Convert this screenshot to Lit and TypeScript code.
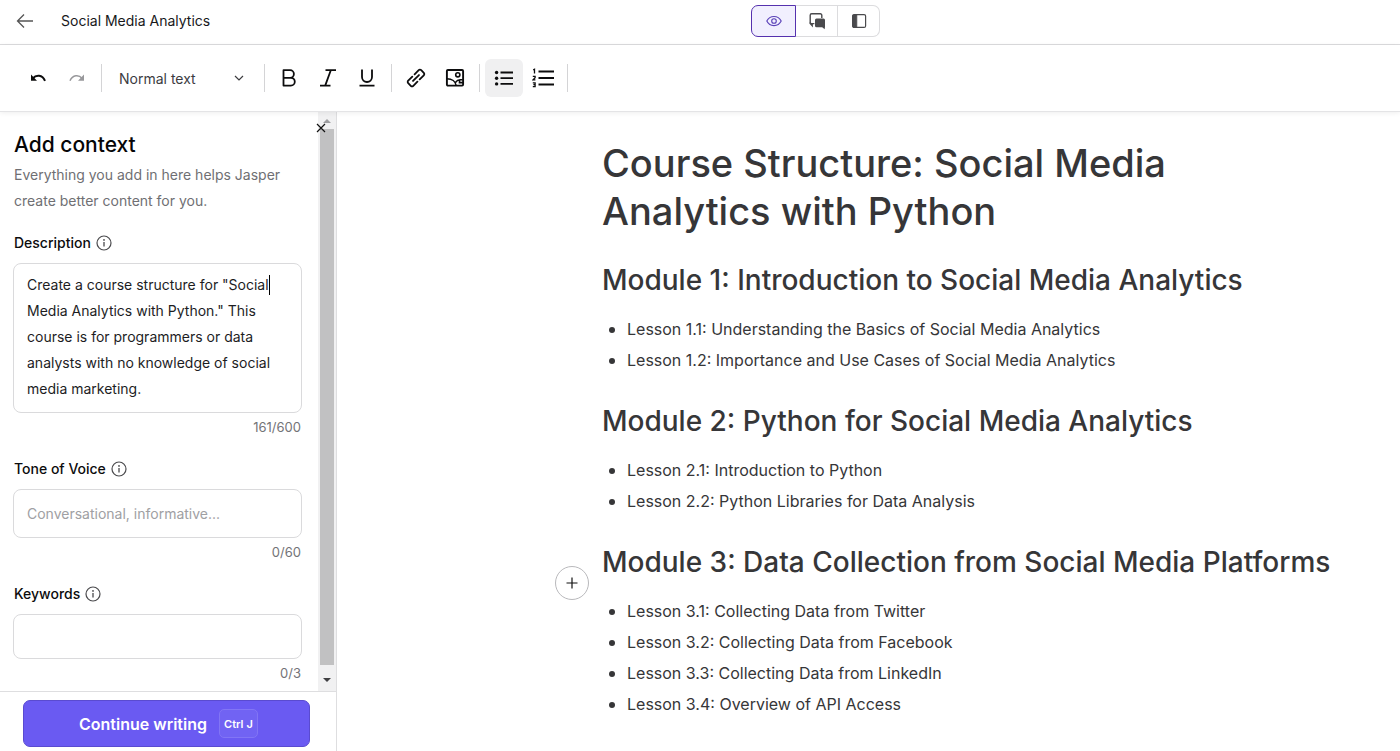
import { LitElement, html, css, svg, nothing, type TemplateResult } from "lit";
import { customElement, property, state } from "lit/decorators.js";
import { classMap } from "lit/directives/class-map.js";

const icon = (size: number, body: TemplateResult, box = 24) => html`
  <svg width=${size} height=${size} viewBox="0 0 ${box} ${box}" fill="none" stroke="currentColor"
    stroke-width="2" aria-hidden="true">${body}</svg>`;

const icons = {
  back: icon(18, svg`<path d="M17 9H1.5M8 2.5L1.5 9 8 15.5" stroke-width="1.3"/>`, 18),
  undo: icon(16, svg`<path d="M3 8.2C6 4.6 12.4 4.4 15 10.8" stroke-width="2"/><path d="M1 4.6v6.2h6z" fill="currentColor" stroke="none"/>`, 16),
  redo: icon(16, svg`<path d="M13 8.2C10 4.6 3.6 4.4 1 10.8" stroke-width="1.5"/><path d="M15 4.6v6.2H9z" fill="currentColor" stroke="none"/>`, 16),
  chevron: icon(10, svg`<path d="M1 3l4 4 4-4" stroke-width="1.2"/>`, 10),
  bold: icon(20, svg`<path d="M4.5 2.2h6.6a3.8 3.8 0 010 7.6H4.5zM4.5 9.8h7.4a3.9 3.9 0 010 7.8H4.5z" stroke-width="1.8" stroke-linejoin="round"/>`, 20),
  italic: icon(20, svg`<path d="M7.5 2.2H18M2 17.6h10.5M12.8 2.2L7.2 17.6" stroke-width="1.8"/>`, 20),
  underline: icon(20, svg`<path d="M5 1.5v7.5a5 5 0 0010 0V1.5M2.5 17.6h15" stroke-width="1.8"/>`, 20),
  link: icon(20, svg`<g transform="rotate(-45 10 10)" stroke-width="1.8" stroke-linecap="round"><path d="M8.4 6.4H2.6a1.8 1.8 0 00-1.8 1.8v3.6a1.8 1.8 0 001.8 1.8h5.8M11.6 13.6h5.8a1.8 1.8 0 001.8-1.8V8.2a1.8 1.8 0 00-1.8-1.8h-5.8M5.8 10h8.4"/></g>`, 20),
  image: icon(20, svg`<rect x="1.9" y="2" width="16.2" height="15.6" rx="1" stroke-width="1.9"/><circle cx="12.8" cy="6.8" r="2.1" stroke-width="1.6"/><path d="M2 10.8c4.8 0 8.6 2.6 9.2 6.8M17.8 11.8h-2.600c-2.2 0-3.600 1-4.800 2.600M14.500 12v2.600h3.500" stroke-width="1.6"/>`, 20),
  bullets: icon(20, svg`<path d="M6.5 4.5H19M6.5 10.2H19M6.5 15.9H19" stroke-width="1.8"/><g fill="currentColor" stroke="none"><circle cx="2.6" cy="4.5" r="1.7"/><circle cx="2.6" cy="10.2" r="1.7"/><circle cx="2.6" cy="15.9" r="1.7"/></g>`, 20),
  numbers: icon(22, svg`<path d="M6.5 4.5H22M6.5 11H22M6.5 17.5H22" stroke-width="2.2"/><path d="M1.2 2.9l1.3-.6v4.2M.8 9.3h2.3v1.5L1 12.9h2.4M.8 15.8h2.3v3.8H.8M1.4 17.7h1.5" stroke-width="1.3"/>`, 22),
  eye: icon(16, svg`<path d="M.8 8C3.8 1.9 12.2 1.9 15.2 8 12.2 14.1 3.8 14.1.8 8z" stroke-width="1.1"/><circle cx="8" cy="8" r="2.3" stroke-width="1.1"/>`, 16),
  chat: icon(18, svg`<path d="M4.2 11.6v2.2l-2-2.2V3.2a1.5 1.5 0 011.5-1.5h8.6a1.5 1.5 0 011.5 1.5V6" stroke-width="1.4"/><path d="M2.2 10.6c0 .6.6 1 1.2 1h3" stroke-width="1.4"/><path d="M8.5 6.6h7a1.5 1.5 0 011.5 1.5v7l-.4 2.2-2.4-2H8.5A1.5 1.5 0 017 13.8V8.1a1.5 1.5 0 011.5-1.5z" fill="currentColor" stroke="none"/>`, 18),
  panel: icon(16, svg`<rect x="1.6" y="1.6" width="13" height="12.8" rx="1.5" stroke-width="1.2"/><path d="M2 2h3.8v12H2z" fill="currentColor" stroke-width=".8"/>`, 16),
  info: icon(16, svg`<circle cx="8" cy="8" r="7" stroke-width="1.2"/><path d="M8 7v4.4" stroke-width="1.3"/><circle cx="8" cy="4.9" r=".9" fill="currentColor" stroke="none"/>`, 16),
  close: icon(10, svg`<path d="M1 1l8 8M9 1L1 9" stroke-width="1.2"/>`, 10),
  plus: icon(12, svg`<path d="M6 .5v11M.5 6h11" stroke-width="1.2"/>`, 12),
  arrowUp: icon(8, svg`<path d="M0 6l4-4 4 4z" fill="currentColor" stroke="none"/>`, 8),
  arrowDown: icon(8, svg`<path d="M0 2l4 4 4-4z" fill="currentColor" stroke="none"/>`, 8),
};

const base = css`
  *, *::before, *::after { box-sizing: border-box; }
  button, input, textarea, select { font: inherit; color: inherit; }
  button { display: inline-flex; align-items: center; justify-content: center; padding: 0; border: 0; background: none; cursor: pointer; }
  svg { display: block; flex: none; }
`;

@customElement("app-header")
class AppHeader extends LitElement {
  @state() private view = 0;

  static styles = [base, css`
    :host { display: grid; grid-template-columns: 13fr auto 9fr; align-items: center; height: 45px; padding-bottom: 3px; border-bottom: 1px solid #dcdcde; }
    .lead { display: flex; align-items: center; gap: 27px; padding-left: 16px; color: #555; }
    .title { margin: 0; font-size: 14px; line-height: 20px; font-weight: 400; color: #18181b; }
    .views { display: flex; height: 32px; color: #4a4a4d; }
    .view { width: 42px; border: 1px solid #dcdcde; border-left-width: 0; }
    .view:first-child { width: 45px; border-left-width: 1px; border-radius: 7px 0 0 7px; }
    .view:last-child { border-radius: 0 7px 7px 0; }
    .view.on { background: #f1effe; border: 1px solid #5531ae; color: #5a41b8; }
  `];

  render() {
    const views = [["Preview", icons.eye], ["Chat", icons.chat], ["Side panel", icons.panel]] as const;
    return html`
      <div class="lead">
        <button aria-label="Back">${icons.back}</button>
        <h1 class="title">Social Media Analytics</h1>
      </div>
      <div class="views">
        ${views.map(([name, glyph], i) => html`
          <button class=${classMap({ view: true, on: this.view === i })} aria-label=${name}
            @click=${() => (this.view = i)}>${glyph}</button>`)}
      </div>`;
  }
}

@customElement("format-toolbar")
class FormatToolbar extends LitElement {
  static styles = [base, css`
    :host { display: flex; align-items: center; gap: 1px; height: 67px; padding-left: 19px; border-bottom: 1px solid #e4e4e6; box-shadow: 0 1px 5px rgba(0, 0, 0, 0.07); background: #fff; position: relative; z-index: 1; color: #0c0c0d; }
    .tool { width: 38px; height: 38px; border-radius: 6px; }
    .tool.on { background: #f0f0f1; }
    .tool:disabled { color: #98989b; }
    .rule { width: 1px; height: 28px; margin: 0 4px; background: #d4d4d6; }
    .style { display: grid; align-items: center; width: 152px; color: #3c3c3f; }
    .style > * { grid-area: 1 / 1; }
    .style svg { justify-self: end; margin-right: 15px; pointer-events: none; }
    .pick { appearance: none; width: 100%; height: 38px; border: 0; padding: 0 12px; background: none; font-size: 14px; }
  `];

  private tool(name: string, glyph: TemplateResult, on = false, disabled = false) {
    return html`<button class=${classMap({ tool: true, on })} aria-label=${name} ?disabled=${disabled}>${glyph}</button>`;
  }

  render() {
    const rule = html`<span class="rule"></span>`;
    return html`
      ${this.tool("Undo", icons.undo)}
      ${this.tool("Redo", icons.redo, false, true)}
      ${rule}
      <div class="style">
        <select class="pick" aria-label="Text style">
          <option>Normal text</option>
          <option>Heading 1</option>
          <option>Heading 2</option>
        </select>
        ${icons.chevron}
      </div>
      ${rule}
      ${this.tool("Bold", icons.bold)}
      ${this.tool("Italic", icons.italic)}
      ${this.tool("Underline", icons.underline)}
      ${rule}
      ${this.tool("Link", icons.link)}
      ${this.tool("Image", icons.image)}
      ${rule}
      ${this.tool("Bulleted list", icons.bullets, true)}
      ${this.tool("Numbered list", icons.numbers)}
      ${rule}`;
  }
}

@customElement("context-field")
class ContextField extends LitElement {
  @property() label = "";
  @property() value = "";
  @property() hint = "";
  @property() count = "";
  @property({ type: Boolean }) multiline = false;
  @property({ type: Boolean }) compact = false;

  static styles = [base, css`
    :host { display: flex; flex-direction: column; font-size: 14px; color: #1d1d1f; }
    .label { display: flex; align-items: center; gap: 5px; margin-bottom: 10px; line-height: 20px; font-weight: 500; color: #0c0c0d; }
    .label svg { color: #4a4a4d; }
    .wrap { position: relative; display: flex; margin: 0 2px 0 -1px; }
    .box { width: 100%; height: 49px; padding: 0 13px; border: 1px solid #dadadc; border-radius: 8px; background: #fff; outline: none; }
    .box.compact { height: 45px; }
    .box.multi { height: 150px; padding: 8px 13px; line-height: 26px; resize: none; overflow: hidden; }
    .box::placeholder { color: #a0a0a3; opacity: 1; }
    .caret { position: absolute; left: 256px; top: 12px; width: 1px; height: 20px; background: #000; }
    .count { margin: 4px 3px 0 0; text-align: right; line-height: 20px; font-size: 13px; color: #737377; }
  `];

  render() {
    return html`
      <label class="label" for="box">${this.label} ${icons.info}</label>
      <div class="wrap">
        ${this.multiline
          ? html`<textarea id="box" class="box multi" .value=${this.value}></textarea><span class="caret"></span>`
          : html`<input id="box" class=${classMap({ box: true, compact: this.compact })}
              placeholder=${this.hint || nothing} .value=${this.value} />`}
      </div>
      <div class="count">${this.count}</div>`;
  }
}

@customElement("context-panel")
class ContextPanel extends LitElement {
  static styles = [base, css`
    :host { display: flex; flex-direction: column; width: 337px; flex: none; border-right: 1px solid #dedee0; }
    .body { position: relative; display: flex; flex: 1; min-height: 0; }
    .form { display: flex; flex-direction: column; gap: 22px; flex: 1; min-width: 0; padding: 19px 14px 0; overflow: hidden; }
    .intro { margin-bottom: -3px; }
    .heading { margin: 0 0 3px; font-size: 21px; line-height: 28px; font-weight: 500; color: #060607; }
    .note { margin: 0; font-size: 14px; line-height: 26px; color: #6f6f73; }
    .bar { display: flex; flex-direction: column; align-items: center; width: 18px; background: #f1f1f2; }
    .cap { display: flex; align-items: center; justify-content: center; height: 17px; color: #9d9da0; }
    .cap.end { height: 22px; color: #3f3f42; }
    .thumb { flex: 1; width: 14px; margin-bottom: 4px; background: #c1c1c2; }
    .close { position: absolute; right: 6px; top: 7px; width: 18px; height: 18px; color: #111; }
    .foot { padding: 8px 26px 4px 23px; border-top: 1px solid #dedee0; }
    .go { width: 100%; height: 47px; gap: 12px; padding-left: 4px; border: 1px solid #5a4bd0; border-radius: 7px; background: #6a5af2; color: #fff; font-size: 16px; font-weight: 600; }
    .keys { display: inline-flex; align-items: center; justify-content: center; gap: 3px; width: 39px; height: 29px; border: 1px solid #8275f5; border-radius: 5px; background: #7163f3; font-family: inherit; font-size: 11px; }
  `];

  render() {
    return html`
      <div class="body">
        <div class="form">
          <div class="intro">
            <h2 class="heading">Add context</h2>
            <p class="note">Everything you add in here helps Jasper create better content for you.</p>
          </div>
          <context-field label="Description" multiline count="161/600"
            value=${'Create a course structure for "Social Media Analytics with Python." This course is for programmers or data analysts with no knowledge of social media marketing.'}></context-field>
          <context-field label="Tone of Voice" hint="Conversational, informative..." count="0/60"></context-field>
          <context-field label="Keywords" compact count="0/3"></context-field>
        </div>
        <div class="bar">
          <span class="cap">${icons.arrowUp}</span>
          <span class="thumb"></span>
          <span class="cap end">${icons.arrowDown}</span>
        </div>
        <button class="close" aria-label="Close">${icons.close}</button>
      </div>
      <div class="foot">
        <button class="go">Continue writing <kbd class="keys"><span>Ctrl</span><span>J</span></kbd></button>
      </div>`;
  }
}

interface Module { title: string; lessons: string[]; insert?: boolean }

const modules: Module[] = [
  {
    title: "Module 1: Introduction to Social Media Analytics",
    lessons: [
      "Lesson 1.1: Understanding the Basics of Social Media Analytics",
      "Lesson 1.2: Importance and Use Cases of Social Media Analytics",
    ],
  },
  {
    title: "Module 2: Python for Social Media Analytics",
    lessons: ["Lesson 2.1: Introduction to Python", "Lesson 2.2: Python Libraries for Data Analysis"],
  },
  {
    title: "Module 3: Data Collection from Social Media Platforms",
    insert: true,
    lessons: [
      "Lesson 3.1: Collecting Data from Twitter",
      "Lesson 3.2: Collecting Data from Facebook",
      "Lesson 3.3: Collecting Data from LinkedIn",
      "Lesson 3.4: Overview of API Access",
    ],
  },
];

@customElement("course-document")
class CourseDocument extends LitElement {
  static styles = [base, css`
    :host { display: grid; grid-template-columns: 1fr minmax(0, 734px) 64px; flex: 1; min-width: 0; color: #363638; overflow: hidden; }
    .page { grid-column: 2; display: flex; flex-direction: column; gap: 27px; padding-top: 27px; }
    .title { margin: 0; font-size: 38px; line-height: 48px; font-weight: 500; }
    .module { position: relative; }
    .name { margin: 0 0 16px; font-size: 28px; line-height: 36px; font-weight: 500; }
    .lessons { margin: 0; padding: 0 0 0 7px; list-style: none; font-size: 16px; line-height: 31px; }
    .lesson { display: flex; align-items: center; gap: 12px; }
    .lesson::before { content: ""; width: 6px; height: 6px; border-radius: 50%; background: #363638; }
    .insert { position: absolute; left: -47px; top: 22px; width: 34px; height: 34px; border: 1px solid #b9b9bc; border-radius: 50%; background: #fff; color: #111; }
  `];

  render() {
    return html`
      <article class="page">
        <h1 class="title">Course Structure: Social Media Analytics with Python</h1>
        ${modules.map((m) => html`
          <section class="module">
            ${m.insert ? html`<button class="insert" aria-label="Insert block">${icons.plus}</button>` : nothing}
            <h2 class="name">${m.title}</h2>
            <ul class="lessons">${m.lessons.map((l) => html`<li class="lesson">${l}</li>`)}</ul>
          </section>`)}
      </article>`;
  }
}

@customElement("app-root")
class AppRoot extends LitElement {
  static styles = [base, css`
    :host { display: flex; flex-direction: column; height: 100vh; background: #fff; font-family: Inter, "Liberation Sans", sans-serif; }
    .main { display: flex; flex: 1; min-height: 0; }
  `];

  render() {
    return html`
      <app-header></app-header>
      <format-toolbar></format-toolbar>
      <main class="main">
        <context-panel></context-panel>
        <course-document></course-document>
      </main>`;
  }
}
